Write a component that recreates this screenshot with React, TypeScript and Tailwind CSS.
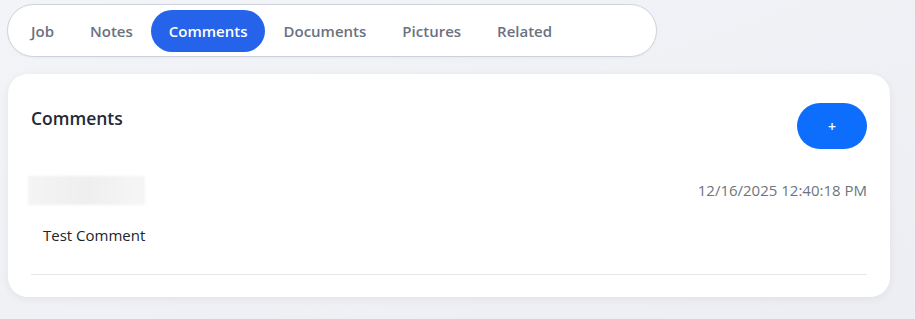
import React from 'react';

const tabs = ['Job', 'Notes', 'Comments', 'Documents', 'Pictures', 'Related'];

const App: React.FC = () => {
  const active = 'Comments';

  return (
    <div
      className="min-h-[319px] w-[915px] bg-gradient-to-br from-[#f3f4f8] to-[#eceef3] pt-[4px]"
      style={{ fontFamily: '"Open Sans", "Noto Sans", sans-serif' }}
    >
      {/* tab bar */}
      <div className="ml-[7px] flex h-[53px] w-[650px] items-center rounded-full border border-[#cdd2dc] bg-white pl-[5px] shadow-[0_1px_2px_rgba(0,0,0,0.04)]">
        {tabs.map((t) => (
          <button
            key={t}
            className={
              t === active
                ? 'flex h-[42px] items-center rounded-full bg-[#2563eb] px-[18px] pt-[2px] text-[15px] font-semibold text-white'
                : 'flex h-[42px] items-center rounded-full px-[18px] pt-[2px] text-[15px] font-semibold text-[#6b7280]'
            }
          >
            {t}
          </button>
        ))}
      </div>

      {/* comments card */}
      <div className="mt-[17px] ml-[8px] w-[882px] rounded-[20px] bg-white px-[23px] pt-[29px] pb-[22px] shadow-[0_2px_10px_rgba(0,0,0,0.06)]">
        <div className="flex items-start justify-between">
          <h2 className="mt-[1px] text-[17.5px] leading-[28px] font-semibold text-[#1f2937]">Comments</h2>
          <button className="flex h-[46px] w-[70px] items-center justify-center rounded-full bg-[#0d6efd] text-[14px] font-semibold text-white">
            +
          </button>
        </div>

        <div className="mt-[27px] flex items-center justify-between">
          <div className="-ml-[3px] h-[29px] w-[117px] bg-gradient-to-r from-[#f4f4f4] via-[#efefef] to-[#f6f6f6] blur-[1px]" />
          <span className="text-[15px] text-[#6c757d]">12/16/2025 12:40:18 PM</span>
        </div>

        <p className="mt-[18px] pl-[12px] text-[15px] leading-[24px] text-[#212529]">Test Comment</p>

        <div className="mt-[27px] border-t border-[#e5e7eb]" />
      </div>
    </div>
  );
};

export default App;
